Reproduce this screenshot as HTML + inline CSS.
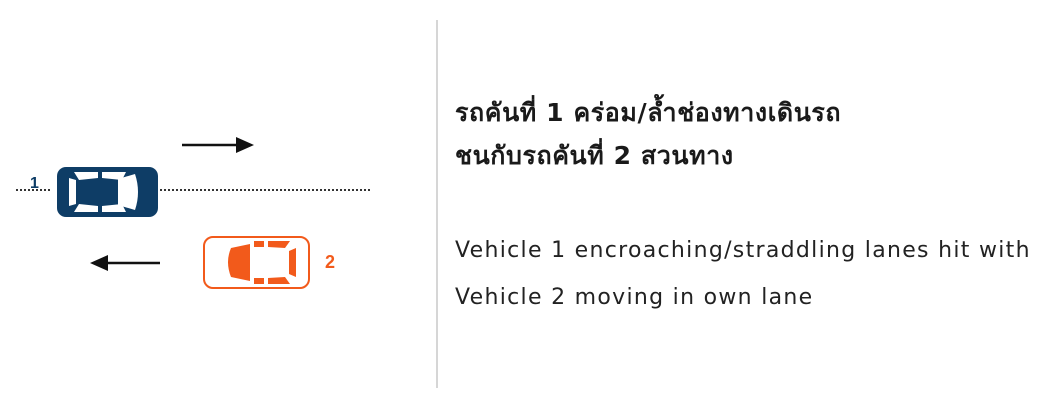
<!DOCTYPE html>
<html><head><meta charset="utf-8"><style>
html,body{margin:0;padding:0;background:#fff;width:1052px;height:400px;overflow:hidden;position:relative}
.t{position:absolute;left:455px;white-space:nowrap;color:#1a1a1a}
.th{font-family:"DejaVu Sans",sans-serif;font-weight:bold;font-size:25px;letter-spacing:0.6px}
.en{font-family:"DejaVu Sans",sans-serif;font-size:22px;letter-spacing:1.3px;color:#222}
</style></head><body>
<div style="position:absolute;left:436px;top:20px;width:2px;height:368px;background:#d6d6d6"></div>
<svg width="430" height="400" style="position:absolute;left:0;top:0">
<line x1="16" y1="190" x2="50" y2="190" stroke="#333" stroke-width="2" stroke-dasharray="2,2"/>
<line x1="160" y1="190" x2="370" y2="190" stroke="#333" stroke-width="2" stroke-dasharray="2,2"/>
<line x1="182" y1="145" x2="240" y2="145" stroke="#111" stroke-width="2.5"/>
<polygon points="236,137 254,145 236,153" fill="#111"/>
<line x1="104" y1="263" x2="160" y2="263" stroke="#111" stroke-width="2.5"/>
<polygon points="108,255 90,263 108,271" fill="#111"/>
<text x="30" y="188" font-family="Liberation Sans,sans-serif" font-weight="bold" font-size="16" fill="#0e3d66">1</text>
<text x="325" y="268" font-family="Liberation Sans,sans-serif" font-weight="bold" font-size="18" fill="#f25a1b">2</text>
<g>
<rect x="57" y="167" width="101" height="50" rx="9" fill="#0e3d66"/>
<path d="M74,172 L98,172 L98,178 L79,180 Z M102,172 L126,172 L122,180 L102,178 Z" fill="#fff"/>
<path d="M74,212 L98,212 L98,206 L79,204 Z M102,212 L126,212 L122,204 L102,206 Z" fill="#fff"/>
<path d="M69,178 L76,180 L76,204 L69,206 Z" fill="#fff"/>
<path d="M118,179 L135,174 Q141,192 135,210 L118,205 Z" fill="#fff"/>
<rect x="81" y="182" width="33" height="20" fill="#0e3d66"/>
</g>
<g>
<rect x="204" y="237" width="105" height="51" rx="9" fill="#fff" stroke="#f25a1b" stroke-width="2"/>
<path d="M231,248 L250,244 L250,281 L231,277 Q225,262 231,248 Z" fill="#f25a1b"/>
<path d="M254,241 L264,241 L264,247 L254,247 Z M268,241 L290,241 L285,248 L268,247 Z" fill="#f25a1b"/>
<path d="M254,284 L264,284 L264,278 L254,278 Z M268,284 L290,284 L285,277 L268,278 Z" fill="#f25a1b"/>
<path d="M289,251 L296,248 L296,277 L289,274 Z" fill="#f25a1b"/>
</g>
</svg>
<div class="t th" style="top:93px">รถคันที่ 1 คร่อม/ล้ำช่องทางเดินรถ</div>
<div class="t th" style="top:136px">ชนกับรถคันที่ 2 สวนทาง</div>
<div class="t en" style="top:238px">Vehicle 1 encroaching/straddling lanes hit with</div>
<div class="t en" style="top:285px">Vehicle 2 moving in own lane</div>
</body></html>
